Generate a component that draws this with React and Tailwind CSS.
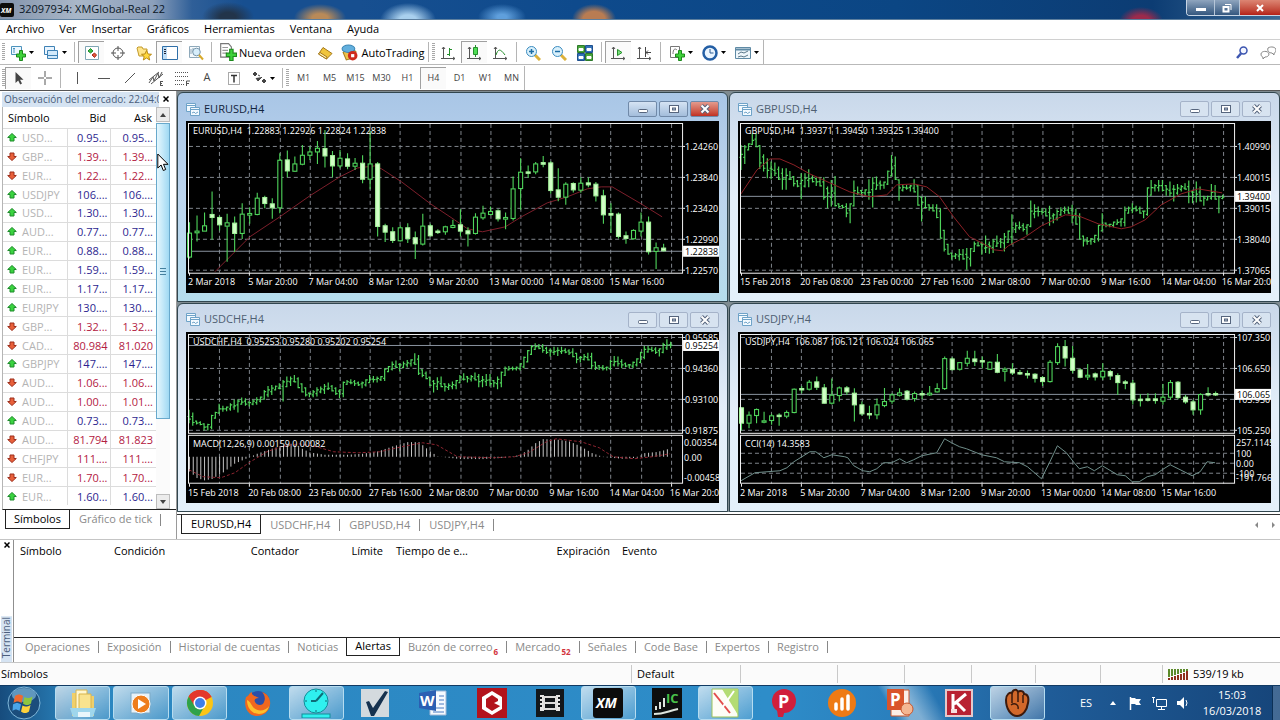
import React from 'react'
import clsx from 'clsx'

const MENUS = ['Archivo', 'Ver', 'Insertar', 'Gráficos', 'Herramientas', 'Ventana', 'Ayuda'];

const QUOTES = [
    ['USD...', '0.95...', '0.95...', 1],
    ['GBP...', '1.39...', '1.39...', 0],
    ['EUR...', '1.22...', '1.22...', 0],
    ['USDJPY', '106....', '106....', 1],
    ['USD...', '1.30...', '1.30...', 1],
    ['AUD...', '0.77...', '0.77...', 1],
    ['EUR...', '0.88...', '0.88...', 1],
    ['EUR...', '1.59...', '1.59...', 1],
    ['EUR...', '1.17...', '1.17...', 1],
    ['EURJPY', '130....', '130....', 1],
    ['GBP...', '1.32...', '1.32...', 0],
    ['CAD...', '80.984', '81.020', 0],
    ['GBPJPY', '147....', '147....', 1],
    ['AUD...', '1.06...', '1.06...', 0],
    ['AUD...', '1.00...', '1.01...', 0],
    ['AUD...', '0.73...', '0.73...', 1],
    ['AUD...', '81.794', '81.823', 0],
    ['CHFJPY', '111....', '111....', 0],
    ['EUR...', '1.70...', '1.70...', 0],
    ['EUR...', '1.60...', '1.60...', 1],
];

// Candles: high, body top, body bottom, low, filled
const EURUSD = [
    [397,430,502,506,0],[377,424,429,455,0],[368,408,424,424,0],[305,374,383,450,1],[378,383,405,422,1],[372,399,409,516,0],
    [380,400,431,487,1],[340,373,431,448,0],[352,371,376,402,0],[309,325,374,376,0],[318,323,341,355,1],[325,342,354,387,1],
    [190,211,354,370,0],[182,210,243,262,1],[200,222,244,246,0],[165,196,223,226,0],[170,186,196,210,0],[153,175,186,222,0],
    [120,176,198,233,1],[183,197,228,262,1],[180,205,228,235,0],[190,207,229,238,1],[204,220,229,240,0],[196,220,268,280,1],
    [122,222,268,298,0],[216,222,410,440,1],[402,408,427,457,1],[412,426,452,460,1],[407,414,453,455,0],[400,414,446,460,1],
    [425,444,462,508,1],[372,409,463,467,0],[402,408,438,440,1],[418,424,428,433,1],[408,411,426,435,0],[390,407,413,415,0],
    [358,405,424,440,1],[412,423,432,470,1],[370,382,431,434,0],[348,370,384,390,0],[350,365,374,376,0],[358,363,387,395,1],
    [368,383,388,418,0],[260,297,386,392,0],[205,247,296,360,0],[227,246,249,264,1],[216,222,246,253,0],[198,218,223,232,1],
    [214,219,302,312,1],[235,300,322,334,1],[277,283,322,345,0],[277,281,300,308,1],[262,280,301,309,0],[263,279,285,292,1],
    [276,283,318,335,1],[300,318,375,402,1],[340,371,376,430,1],[368,373,440,446,1],[425,438,446,462,1],[418,422,447,449,0],
    [368,397,424,440,0],[380,397,486,494,1],[458,474,485,538,0],[462,475,483,485,1],
];

const USDJPY = [
    [322,324,370,392,1],[335,346,370,385,0],[326,329,347,370,0],[336,363,367,370,0],[342,348,362,375,0],[340,346,349,378,1],
    [332,338,349,355,0],[266,268,338,340,0],[258,266,270,280,1],[240,247,268,272,0],[230,246,262,270,1],[252,264,310,312,1],
    [236,286,310,314,0],[260,264,287,305,0],[258,264,276,285,1],[265,280,315,365,1],[305,315,342,348,1],[318,341,345,358,1],
    [296,315,345,358,0],[264,305,317,322,0],[280,285,304,312,0],[265,279,286,290,0],[270,274,298,302,1],[275,281,296,305,0],
    [272,281,284,298,1],[258,280,285,288,0],[250,266,276,278,0],[170,176,266,270,0],[172,177,209,212,1],[186,188,208,212,0],
    [152,175,190,200,0],[152,177,185,198,1],[170,182,185,205,1],[185,187,208,210,0],[162,187,217,220,1],[202,208,214,245,0],
    [190,208,219,225,1],[210,218,221,225,1],[212,221,224,236,1],[220,223,235,248,1],[228,233,245,258,1],[180,187,245,248,0],
    [130,140,188,195,0],[120,140,174,200,1],[138,175,211,220,1],[205,210,232,235,1],[192,226,231,240,0],[218,222,231,242,1],
    [190,214,231,240,0],[210,215,228,240,1],[220,227,248,285,1],[240,246,250,268,1],[240,250,300,314,1],[282,298,301,320,1],
    [280,297,301,305,1],[280,297,302,312,1],[252,292,304,315,0],[240,248,292,300,0],[243,247,293,298,1],[285,292,306,312,1],
    [300,306,330,345,1],[280,284,330,345,0],[262,281,285,290,1],[275,281,285,288,1],
];

// Bars: high, low
const GBPUSD = [
    [165,240],[165,222],[160,182],[130,165],[130,172],[165,237],[193,245],[205,265],[215,268],[218,258],[230,270],[235,300],
    [235,300],[243,270],[258,290],[270,292],[250,328],[250,293],[238,292],[255,278],[262,288],[262,290],[262,330],[290,355],
    [270,350],[258,350],[340,355],[345,355],[340,382],[340,400],[272,350],[290,315],[300,318],[298,318],[268,330],[262,353],
    [260,300],[272,300],[275,297],[242,285],[195,260],[200,270],[268,333],[283,305],[285,300],[285,305],[268,308],[285,348],
    [320,395],[320,355],[343,363],[343,365],[343,385],[355,447],[420,485],[462,495],[488,510],[490,508],[478,512],[478,510],
    [475,540],[475,530],[455,487],[455,470],[455,495],[437,490],[455,492],[448,490],[437,472],[445,475],[430,485],[422,460],
    [373,465],[398,430],[395,420],[400,425],[403,435],[332,412],[343,385],[350,380],[355,375],[355,380],[348,408],[370,400],
    [358,392],[352,378],[350,372],[350,372],[345,400],[357,405],[370,450],[437,470],[442,465],[445,465],[435,460],[405,455],
    [370,425],[398,412],[402,412],[395,412],[388,405],[385,410],[350,410],[350,372],[340,370],[348,365],[350,372],[362,385],
    [292,378],[270,318],[282,305],[270,305],[270,305],[285,318],[275,320],[285,335],[282,315],[285,305],[280,300],[272,340],
    [300,340],[275,338],[290,335],[318,348],[318,332],[282,330],[285,330],[318,370],[315,328],
];

const USDCHF = [
    [330,370],[338,378],[362,374],[364,376],[370,392],[372,392],[345,388],[336,357],[312,342],[318,336],[320,334],[310,333],
    [300,330],[298,338],[293,315],[295,318],[305,320],[300,316],[292,315],[290,308],[270,300],[258,292],[255,285],[257,272],
    [250,268],[240,305],[230,262],[230,258],[225,248],[232,265],[250,278],[262,290],[278,292],[270,292],[262,290],[260,280],
    [252,282],[248,270],[255,275],[262,285],[268,295],[245,292],[240,255],[238,253],[240,258],[245,258],[245,265],[238,260],
    [225,250],[228,248],[230,248],[228,243],[205,243],[198,217],[185,212],[182,205],[190,215],[185,205],[180,203],[178,200],
    [160,195],[165,225],[208,232],[215,238],[230,258],[240,278],[232,270],[230,262],[250,275],[250,270],[245,268],[240,268],
    [225,250],[220,242],[228,248],[225,245],[218,242],[222,262],[228,262],[222,258],[222,260],[240,262],[230,268],[215,262],
    [200,228],[198,212],[200,212],[200,212],[190,212],[170,205],[150,188],[135,165],[130,150],[132,148],[132,158],[140,162],
    [145,170],[140,165],[142,168],[140,162],[145,160],[148,165],[145,172],[158,190],[168,188],[162,182],[158,182],[158,208],
    [185,210],[195,210],[195,212],[200,212],[180,210],[168,200],[170,200],[178,205],[188,202],[192,205],[185,205],[175,200],
    [155,190],[138,178],[138,158],[140,155],[142,162],[145,170],[128,160],[118,150],[125,145],
];

const MACD = [
    [0,515],[2,535],[4,542],[6,538],[9,518],[12,492],[16,472],[18,462],[21,450],[24,440],[27,432],[30,447],[32,458],[36,465],
    [42,465],[46,462],[50,455],[54,440],[58,427],[61,427],[64,455],[66,470],[72,478],[78,478],[84,474],[88,465],[90,450],
    [92,430],[94,418],[98,420],[101,425],[104,440],[107,460],[110,472],[115,477],[119,474],[121,460],[124,457],[126,452],[128,445],
];

const MACD_SIGNAL = '3,138 17,145 35,146 49,141 63,131 81,120 95,115 113,112 131,115 148,120 173,121 194,120 216,115 237,111 251,113 272,125 308,126 329,125 343,121 361,110 371,107 396,110 414,116 428,125 449,127 467,125 485,122';
const EUR_MA = '29,151 64,116 94,96 124,75 154,56 172,47 189,45 196,48 216,61 245,83 269,99 282,108 297,111 320,106 336,96 362,82 382,76 402,68 416,66 427,66 456,83 477,96';
const GBP_MA = '3,73 19,49 32,38 42,38 56,44 72,53 92,62 112,71 132,76 149,74 159,64 176,63 189,66 202,76 216,96 232,116 246,123 256,129 265,130 271,125 288,116 304,105 328,94 341,95 361,103 384,108 394,106 408,99 424,84 444,73 461,68 485,72';
const CCI = '3,149 17,141 42,139 49,136 56,130 72,120 78,120 86,126 94,123 107,125 110,126 116,134 125,139 132,140 139,137 146,131 154,131 162,127 169,131 176,128 184,124 199,121 207,107 214,111 222,115 229,117 244,123 259,126 267,130 282,131 290,135 304,147 312,131 320,114 329,121 336,130 342,137 350,135 357,139 365,134 380,143 388,144 395,150 402,150 410,145 418,143 425,138 433,133 455,144 463,140 470,130 478,131';

const FEB_DATES = ['15 Feb 2018', '20 Feb 08:00', '23 Feb 00:00', '27 Feb 16:00', '2 Mar 08:00', '7 Mar 00:00', '9 Mar 16:00', '14 Mar 04:00', '16 Mar 20:00'];
const MAR_DATES = ['2 Mar 2018', '5 Mar 20:00', '7 Mar 04:00', '8 Mar 12:00', '9 Mar 20:00', '13 Mar 00:00', '14 Mar 08:00', '15 Mar 16:00'];

const GRID = 30.17;
const LIME = '#4fd45b';

function Candles({ data, top }) {
    return data.map(([h, a, b, l, filled], i) => {
        const x = 3.5 + i * 7.54;
        const y = (v) => v / 3 - top;
        const height = Math.max(y(b) - y(a), 1.4);
        return (
            <g key={i} stroke={LIME} strokeWidth="1.1">
                <path d={`M${x} ${y(h)}V${y(a)}M${x} ${y(b)}V${y(l)}`} />
                <rect x={x - 2} y={y(a)} width="4" height={height} fill={filled ? '#d2ffc8' : '#000'} stroke={filled ? '#a5f29c' : LIME} />
            </g>
        );
    });
}

function Bars({ data, top }) {
    const mid = (i) => (data[i][0] + data[i][1]) / 2;
    const clamp = (v, [h, l]) => Math.min(Math.max(v, h + 2), l - 2) / 3 - top;
    const d = data.map((bar, i) => {
        const x = 3 + i * 3.77;
        const open = clamp(mid(Math.max(i - 1, 0)), bar);
        const close = clamp(mid(Math.min(i + 1, data.length - 1)), bar);
        return `M${x} ${bar[0] / 3 - top}V${bar[1] / 3 - top}M${x - 1.5} ${open}H${x}M${x} ${close}H${x + 1.9}`;
    }).join('');
    return <path d={d} stroke={LIME} strokeWidth="1.2" fill="none" />;
}

function Macd() {
    const bars = [];
    for (let s = 0; s < MACD.length - 1; s++) {
        const [k0, v0] = MACD[s];
        const [k1, v1] = MACD[s + 1];
        for (let k = k0; k < k1; k++) {
            bars.push([k, v0 + ((v1 - v0) * (k - k0)) / (k1 - k0)]);
        }
    }
    return (
        <>
            <path d={bars.map(([k, v]) => `M${3.5 + k * 3.77} 125V${v / 3 - 32}`).join('')} stroke="#c4c4c4" strokeWidth="1" />
            <polyline points={MACD_SIGNAL} fill="none" stroke="#8e2430" strokeDasharray="3 2" />
        </>
    );
}

function Chart({ info, rows, levels, priceY, price, dates, bottom = 152, indicator, extra = [], children }) {
    const cols = Array.from({ length: 16 }, (_, i) => Math.round(3 + GRID * (i + 1)) + 0.5);
    return (
        <svg viewBox="0 0 534 172" className="block w-full bg-black" fontFamily="'Open Sans', 'Noto Sans', sans-serif" fontSize="9" fill="#fff" role="img" aria-label={info}>
            <g stroke="#80858c" strokeWidth="1" strokeDasharray="4 3">
                {cols.map((x) => <path key={x} d={`M${x} 3V152`} />)}
                {rows.map((y) => <path key={y} d={`M3 ${y}.5H497`} />)}
            </g>
            {indicator && <path d="M3 102.5H497" stroke="#000" strokeWidth="2" />}
            <path d={`M3 ${priceY}.5H497`} stroke="#8a94a0" />
            {children}
            <g fill="none" stroke="#f2f2f2">
                <rect x="2.5" y="2.5" width="495" height={bottom - 2} />
                {indicator && <rect x="2.5" y="103.5" width="495" height="48" />}
                {dates.map((d, i) => <path key={d} d={`M${Math.round(3 + i * GRID * 2)}.5 152V155`} />)}
                {levels.map(([y]) => <path key={y} d={`M498 ${y}.5H500`} />)}
            </g>
            <text x="7" y="13" xmlSpace="preserve">{info}</text>
            {indicator && <text x="7" y="115">{indicator}</text>}
            {levels.map(([y, label]) => <text key={label} x="500" y={y + 4}>{label}</text>)}
            {extra.map(([y, label]) => <text key={label} x="499" y={y + 4}>{label}</text>)}
            <rect x="498" y={priceY - 5} width="36" height="11" />
            <text x="500" y={priceY + 4} fill="#000">{price}</text>
            {dates.map((d, i) => <text key={d} x={2 + i * GRID * 2} y="164">{d}</text>)}
        </svg>
    );
}

function WindowIcon() {
    return (
        <svg viewBox="0 0 14 13" className="h-[13px] w-[14px]" fill="#f3faff" stroke="#6fa3c8">
            <path d="M.5 .5h9v8h-9zM.5 2.5h9" />
            <path d="M4.500 4.500h9v8h-9zM4.500 6.500h9" />
            <path d="M6 10l2-1 1.500 1.500L12 9" fill="none" />
        </svg>
    );
}

function ChartWindow({ title, active, children }) {
    const button = clsx(
        'flex h-4 w-[29px] items-center justify-center rounded-[2px] border',
        active ? 'border-[#7089a8] bg-linear-to-b' : 'border-[#a5b3c9] bg-[#d7e3f0]'
    );
    const blue = active && 'from-[#d5e3f3] to-[#a3bddb]';
    return (
        <section className={clsx(
            'rounded-t-md border border-[#31464f] px-2 pb-2',
            active ? 'bg-linear-to-b from-[#a9c6e6] via-[#bdd5ee] to-[#b5dcec]' : 'bg-linear-to-b from-[#c9d8ea] via-[#e3eef9] to-[#e4f0fa]'
        )}>
            <header className="flex h-7 items-center gap-1 pt-1">
                <WindowIcon />
                <h2 className={clsx('flex-1 text-[11px]', active ? 'text-[#12233c]' : 'text-[#4f5f72]')}>{title}</h2>
                <div className="flex gap-[2px]">
                    <button type="button" aria-label="Minimizar" className={clsx(button, blue)}>
                        <svg viewBox="0 0 12 10" className="h-[10px] w-3"><rect x="1.500" y="5.500" width="9" height="3" rx="1" fill="#fff" stroke="#56657d" /></svg>
                    </button>
                    <button type="button" aria-label="Maximizar" className={clsx(button, blue)}>
                        <svg viewBox="0 0 12 10" className="h-[10px] w-3"><rect x="1.500" y="1.500" width="9" height="7" fill="#fff" stroke="#56657d" /><rect x="4.500" y="4" width="3" height="2" fill="#aebdd0" stroke="#56657d" /></svg>
                    </button>
                    <button type="button" aria-label="Cerrar" className={clsx(button, active && 'from-[#e39a8d] to-[#c02f22]')}>
                        <svg viewBox="0 0 12 10" className="h-[10px] w-3">
                            <path d="M2.500 1.500l7 7M9.500 1.500l-7 7" stroke="#56657d" strokeWidth="4" />
                            <path d="M2.500 1.500l7 7M9.500 1.500l-7 7" stroke="#fff" strokeWidth="2" />
                        </svg>
                    </button>
                </div>
            </header>
            {children}
        </section>
    );
}

function Grip() {
    return <span className="h-[18px] w-[3px] shrink-0 bg-[repeating-linear-gradient(#a8a8a8_0_1px,#fff_1px_2px)]" />;
}

function Sep() {
    return <span className="mx-[3px] h-5 w-px shrink-0 bg-[#b5b5b5]" />;
}

function Tool({ label, pressed, drop, children }) {
    return (
        <button
            type="button"
            aria-label={label}
            className={clsx('flex h-[22px] shrink-0 items-center justify-center border-t border-l', drop ? 'w-[33px] gap-[3px]' : 'w-[26px]', pressed ? 'border-[#a0a0a0] bg-[#fafafa]' : 'border-transparent')}
        >
            <svg viewBox="0 0 16 16" className="size-4 shrink-0" fill="none" stroke="#555">{children}</svg>
            {drop && <svg viewBox="0 0 5 3" className="h-[3px] w-[5px]"><path d="M0 0h5L2.500 3z" /></svg>}
        </button>
    );
}

function Plus() {
    return <path d="M9.500 5.500h3v3.500h3v3h-3v3.500h-3v-3.500h-3v-3h3z" fill="#3fd23a" stroke="#1c8a1c" />;
}

function Axes() {
    return <path d="M3.500 2v11.500M1 13.500h14M2 4l1.500-2L5 4M13 12l2 1.500-2 1.500" />;
}

function StandardToolbar() {
    return (
        <div className="flex h-[25px] items-center border-b border-[#b9b9b9] pl-[2px]">
            <Grip />
            <Tool label="Nuevo gráfico" drop>
                <path d="M1.500 1.500h10v8h-10z" fill="#eef8ff" stroke="#4c93bd" /><path d="M4 3v5M3 4l1-1 1 1" stroke="#4c93bd" /><Plus />
            </Tool>
            <Tool label="Perfiles" drop>
                <path d="M1.500 1.500h10v8h-10z" fill="#eaf5ff" stroke="#3f82b5" /><path d="M4.500 5.500h10v8h-10zM4.500 10.500h10" fill="#d2e9fa" stroke="#3f82b5" />
            </Tool>
            <Sep />
            <Tool label="Observación del mercado" pressed>
                <path d="M1.500 1.500h13v13h-13z" fill="#fff" stroke="#7fa6b4" />
                <path d="M4 6l2.500-2.500L9 6 6.500 8z" fill="#3fc045" stroke="#1c8a2a" /><path d="M8 10l2.500-2 2 2-2 2.500z" fill="#e2553a" stroke="#a82a18" />
            </Tool>
            <Tool label="Ventana de datos">
                <circle cx="8" cy="8" r="5" /><path d="M8 1v5M8 10v5M1 8h5M10 8h5" />
            </Tool>
            <Tool label="Navegador">
                <path d="M1 3l1-1h4l1 2h4v7H3z" fill="#ffe58a" stroke="#c29a2b" />
                <path d="M10.500 5.500l1.500 3.500 3.500.3-2.700 2.200.9 3.500-3.200-2-3.200 2 .9-3.500L5.500 9.300 9 9z" fill="#ffd83b" stroke="#b98a14" />
            </Tool>
            <Tool label="Terminal" pressed>
                <path d="M.5 1.500h15v13H.5z" fill="#fff" stroke="#2f6fa8" /><path d="M1 2h4v12H1z" fill="#bcdcf5" stroke="none" /><path d="M2 4.500h2M2 6.500h2M2 8.500h2" stroke="#223" />
            </Tool>
            <Tool label="Probador de estrategias">
                <path d="M1.500 1.500h10v11h-10z" stroke="#8fa9ba" fill="#f5fafd" /><path d="M3 4v5M5 3v4" stroke="#8fa9ba" />
                <circle cx="8.500" cy="7" r="3.800" fill="#d7eefb" stroke="#7795aa" /><path d="M11 10l4 4.500" stroke="#d7a92b" strokeWidth="2" />
            </Tool>
            <Sep />
            <button type="button" className="flex shrink-0 items-center gap-[2px] pl-1 text-[11px] leading-none">
                <svg viewBox="0 0 16 16" className="size-[18px]" fill="none" stroke="#555">
                    <path d="M1.500.5h7l2.500 3v9H1.500z" fill="#fff" stroke="#777" /><path d="M3 4h5M3 6.500h5M3 9h4" stroke="#999" /><Plus />
                </svg>
                Nueva orden
            </button>
            <span className="w-1.5 shrink-0" />
            <Tool label="MetaEditor">
                <path d="M1.500 9L6 2.500l9 6L9.500 14z" fill="#f0c53d" stroke="#a6791a" /><path d="M1.500 9l8 5 .5-2L3 7.500z" fill="#fff2b8" stroke="#a6791a" />
            </Tool>
            <button type="button" className="flex shrink-0 items-center gap-[3px] pl-1 text-[11px] leading-none">
                <svg viewBox="0 0 16 16" className="size-[17px]">
                    <path d="M2 8l6-5 6 4-2 6-7 2z" fill="#eec14a" stroke="#a97f20" /><ellipse cx="7" cy="4.500" rx="6" ry="3.500" fill="#63b0de" stroke="#3a86b5" />
                    <circle cx="11" cy="11" r="4.500" fill="#cf2a1d" /><path d="M9.500 9.500h3v3h-3z" fill="#fff" />
                </svg>
                AutoTrading
            </button>
            <Sep />
            <Grip />
            <Tool label="Barras"><Axes /><path d="M9.500 3v8M7 9.500h2.500M9.500 4.500H12" stroke="#258f2c" /></Tool>
            <Tool label="Velas" pressed><Axes /><path d="M9.500 0v12" stroke="#258f2c" /><path d="M7.500 2.500h4v7h-4z" fill="#4fdd55" stroke="#258f2c" /></Tool>
            <Tool label="Línea"><Axes /><path d="M4 10c2-6 4-7 9 0" stroke="#258f2c" /></Tool>
            <Sep />
            <Tool label="Acercar">
                <path d="M10 10l5 5" stroke="#dcb13a" strokeWidth="3" /><circle cx="6.500" cy="6.500" r="5" fill="#d9f0fb" stroke="#3c8cc0" /><path d="M6.500 4v5M4 6.500h5" stroke="#1c6ca5" strokeWidth="1.500" />
            </Tool>
            <Tool label="Alejar">
                <path d="M10 10l5 5" stroke="#dcb13a" strokeWidth="3" /><circle cx="6.500" cy="6.500" r="5" fill="#d9f0fb" stroke="#3c8cc0" /><path d="M4 6.500h5" stroke="#1c6ca5" strokeWidth="1.500" />
            </Tool>
            <Tool label="Mosaico">
                <path d="M.5.5h7v7h-7zM8.500 8.500h7v7h-7z" fill="#49a53b" stroke="#2c7a2a" /><path d="M8.500.5h7v7h-7zM.5 8.500h7v7h-7z" fill="#3271b8" stroke="#1e4f8d" />
                <path d="M2 3.500h4v2H2zM10 3.500h4v2h-4zM2 11.500h4v2H2zM10 11.500h4v2h-4z" fill="#fff" stroke="#fff" />
            </Tool>
            <Sep />
            <Tool label="Desplazamiento automático" pressed><Axes /><path d="M7.500 4.500l4.500 3-4.500 3z" fill="#7be07a" stroke="#258f2c" /></Tool>
            <Tool label="Desplazar gráfico"><Axes /><path d="M9.500 2v10M15 7.500h-5M12 5.500l-2 2 2 2" stroke="#444" /></Tool>
            <Sep />
            <Tool label="Indicadores" drop>
                <path d="M1.500 1.500h9v11h-9z" fill="#fff" stroke="#777" /><path d="M4 9c0-5 2-6 4-4" stroke="#777" /><Plus />
            </Tool>
            <Tool label="Periodos" drop>
                <circle cx="8" cy="8" r="6.500" fill="#eaf5ff" stroke="#245fa5" strokeWidth="2.500" /><path d="M8 4v4h3.500" stroke="#2c5d94" />
            </Tool>
            <Tool label="Plantillas" drop>
                <path d="M.5 2.500h15v11H.5z" fill="#eef6fb" stroke="#5f8aa5" /><path d="M1 4.500h14" stroke="#5f8aa5" strokeWidth="2" /><path d="M3 9l3-2 3 1 4-2M3 12l3-1 3 1 4-2" stroke="#5b7789" />
            </Tool>
            <span className="h-6 w-px bg-[#b5b5b5]" />
            <span className="flex-1" />
            <Tool label="Buscar"><circle cx="9.500" cy="5.500" r="3.500" fill="#f3f6ff" stroke="#3c55b0" strokeWidth="1.500" /><path d="M7 8.500L3 13" stroke="#3c55b0" strokeWidth="2.500" /></Tool>
            <Tool label="Chat">
                <path d="M8 3c3-2 8-1 8 2 0 2-1 3-2 3v2l-2-2c-3 0-5-2-4-5z" fill="#fff" stroke="#888" /><path d="M1 9c0-3 7-4 8 0 0 2-2 3-4 3l-2 2v-2c-1 0-2-1-2-3z" fill="#fff" stroke="#888" />
            </Tool>
        </div>
    );
}

function DrawToolbar() {
    const periods = ['M1', 'M5', 'M15', 'M30', 'H1', 'H4', 'D1', 'W1', 'MN'];
    return (
        <div className="flex h-[26px] items-center border-b border-[#555] pl-[2px]">
            <Grip />
            <Tool label="Cursor" pressed><path d="M4.500 2v11l2.700-2.500 2 4 1.800-1-2-3.800h3.500z" fill="#444" stroke="none" /></Tool>
            <Tool label="Cruz"><path d="M8 1v6M8 9v6M1 8h6M9 8h6" /></Tool>
            <Sep />
            <Tool label="Línea vertical"><path d="M7.500 2v12" /></Tool>
            <Tool label="Línea horizontal"><path d="M2 8.500h12" /></Tool>
            <Tool label="Línea de tendencia"><path d="M3 13L13 3" /></Tool>
            <Tool label="Canal equidistante">
                <path d="M1 10L11 2M3 14L15 4M1 13l4-6 1 4 4-8 1 5 3-6M12 11.500h3M12 13.500h2M12 15.500h3M12.500 11v5" />
            </Tool>
            <Tool label="Retroceso de Fibonacci">
                <path d="M1 2.500h13M1 6.500h13M1 10.500h9M1 14.500h9" strokeDasharray="1 1" /><path d="M12.500 16v-5H16M12 13.500h3" />
            </Tool>
            <button type="button" className="w-[26px] text-[11px] text-[#444]">A</button>
            <Tool label="Etiqueta de texto"><path d="M2.500 2.500h11v12h-11z" strokeDasharray="1 1" /><path d="M5 5.500h6M8 5.500v7" stroke="#333" strokeWidth="1.500" /></Tool>
            <Tool label="Flechas" drop>
                <path d="M2 4l2-2 2 2-2 2zM11 11l2-2 2 2-2 2zM7 5l2 1M5 8l2 3 4-4" fill="#444" stroke="#444" />
            </Tool>
            <Sep />
            <Grip />
            <div className="flex pl-px">
                {periods.map((p) => (
                    <button key={p} type="button" className={clsx('h-[22px] w-[26px] border-t border-l text-[9px] text-[#444]', p === 'H4' ? 'border-[#a0a0a0] bg-[#fafafa]' : 'border-transparent')}>{p}</button>
                ))}
            </div>
            <span className="h-6 w-px bg-[#b5b5b5]" />
        </div>
    );
}

function MarketWatch() {
    return (
        <aside className="flex w-[177px] shrink-0 flex-col border-r border-[#9a9a9a] bg-white pl-[2px]">
            <div className="flex h-4 items-center pr-[7px]">
                <h2 className="w-[157px] overflow-hidden bg-[#d5e3f2] pl-[2px] text-[10px] leading-[15px] whitespace-nowrap text-[#4a5e7c]">Observación del mercado: 22:04:0</h2>
                <button type="button" aria-label="Cerrar panel" className="ml-1 flex flex-1 justify-center">
                    <svg viewBox="0 0 6 6" className="size-[6px]"><path d="M.5.5l5 5M5.500.5l-5 5" stroke="#000" strokeWidth="1.500" /></svg>
                </button>
            </div>
            <div className="flex h-[403px] border-b border-l border-b-[#222] border-l-[#b5b5b5]">
                <div className="w-[153px] overflow-hidden">
                    <table className="h-[398px] w-full table-fixed border-collapse text-[11px] leading-none">
                        <thead>
                            <tr className="h-[21px]">
                                <th className="w-16 pl-[5px] text-left font-normal">Símbolo</th>
                                <th className="w-[43px] pr-1 text-right font-normal">Bid</th>
                                <th className="pr-1 text-right font-normal">Ask</th>
                            </tr>
                        </thead>
                        <tbody>
                            {QUOTES.map(([symbol, bid, ask, up], i) => (
                                <tr key={i} className={clsx('border-t border-[#dcdcdc]', up ? 'text-[#2d1f8f]' : 'text-[#b3203f]')}>
                                    <td className="border-r border-[#dcdcdc] pl-[4px] text-[#b4b4b4]">
                                        <span className="flex items-center gap-[5px]">
                                            <svg viewBox="0 0 10 9" className="h-[9px] w-[10px]">
                                                {up
                                                    ? <path d="M5 .5l4.300 4H7v3.500H3V4.500H.7z" fill="#3ad33f" stroke="#1e8a2c" />
                                                    : <path d="M5 8.500l4.300-4H7V1H3v3.500H.7z" fill="#e8603a" stroke="#9c2f1c" />}
                                            </svg>
                                            {symbol}
                                        </span>
                                    </td>
                                    <td className="border-r border-[#dcdcdc] pr-[2px] text-right">{bid}</td>
                                    <td className="pr-[3px] text-right">{ask}</td>
                                </tr>
                            ))}
                        </tbody>
                    </table>
                </div>
                <div className="flex w-[14px] flex-col bg-[#fbfbfb]">
                    <button type="button" aria-label="Subir" className="flex h-[15px] items-center justify-center border border-[#bdbdbd] bg-[#ececec]">
                        <svg viewBox="0 0 6 4" className="h-1 w-[6px]"><path d="M0 4h6L3 0z" fill="#444" /></svg>
                    </button>
                    <div className="mt-px flex h-[296px] flex-col items-center justify-center gap-[2px] border border-[#68a9cc] bg-linear-to-r from-[#e5f7fe] to-[#9fd9f3]">
                        <span className="h-px w-[6px] bg-[#44809f]" />
                        <span className="h-px w-[6px] bg-[#44809f]" />
                        <span className="h-px w-[6px] bg-[#44809f]" />
                    </div>
                    <span className="flex-1" />
                    <button type="button" aria-label="Bajar" className="flex h-[15px] items-center justify-center border border-[#bdbdbd] bg-[#ececec]">
                        <svg viewBox="0 0 6 4" className="h-1 w-[6px]"><path d="M0 0h6L3 4z" fill="#444" /></svg>
                    </button>
                </div>
            </div>
            <div className="flex h-[19px] items-center pl-[3px] text-[11px]">
                <button type="button" className="h-full border-x border-b border-[#222] bg-white px-2">Símbolos</button>
                <button type="button" className="pl-[9px] text-[#8a8a8a]">Gráfico de tick</button>
                <span className="ml-[8px] h-3 w-px bg-[#888]" />
            </div>
        </aside>
    );
}

function Workspace() {
    const eurLevels = [[25, '1.24260'], [56, '1.23840'], [87, '1.23420'], [118, '1.22990'], [149, '1.22570']];
    const gbpLevels = [[25, '1.40990'], [56, '1.40015'], [87, '1.39015'], [118, '1.38040'], [149, '1.37065']];
    const chfLevels = [[5, '0.95585'], [36, '0.94360'], [67, '0.93100'], [98, '0.91875']];
    const jpyLevels = [[5, '107.350'], [36, '106.650'], [67, '105.950'], [98, '105.250']];
    return (
        <main className="flex min-w-0 flex-1 flex-col bg-white">
            <div className="grid grid-cols-2 gap-px bg-[#7f8b91] pt-px">
                <ChartWindow title="EURUSD,H4" active>
                    <Chart info="EURUSD,H4  1.22883 1.22926 1.22824 1.22838" rows={[25, 56, 87, 118, 149]} levels={eurLevels} priceY={130} price="1.22838" dates={MAR_DATES}>
                        <polyline points={EUR_MA} fill="none" stroke="#7d1f2b" />
                        <Candles data={EURUSD} top={31} />
                    </Chart>
                </ChartWindow>
                <ChartWindow title="GBPUSD,H4">
                    <Chart info="GBPUSD,H4  1.39371 1.39450 1.39325 1.39400" rows={[25, 56, 87, 118, 149]} levels={gbpLevels} priceY={75} price="1.39400" dates={FEB_DATES}>
                        <Bars data={GBPUSD} top={31} />
                        <polyline points={GBP_MA} fill="none" stroke="#8e2026" />
                    </Chart>
                </ChartWindow>
                <ChartWindow title="USDCHF,H4">
                    <Chart info="USDCHF,H4  0.95253 0.95280 0.95202 0.95254" rows={[5, 36, 67, 98]} levels={chfLevels} priceY={13} price="0.95254" dates={FEB_DATES} bottom={101}
                        indicator="MACD(12,26,9) 0.00159 0.00082" extra={[[110, '0.00354'], [125, '0.00'], [145, '-0.00458']]}>
                        <Bars data={USDCHF} top={32} />
                        <Macd />
                    </Chart>
                </ChartWindow>
                <ChartWindow title="USDJPY,H4">
                    <Chart info="USDJPY,H4  106.087 106.121 106.024 106.065" rows={[5, 36, 67, 98, 121, 131, 141]} levels={jpyLevels} priceY={62} price="106.065" dates={MAR_DATES} bottom={101}
                        indicator="CCI(14) 14.3583" extra={[[110, '257.1145'], [121, '100'], [131, '0.00'], [141, '-100'], [145, '-191.766']]}>
                        <Candles data={USDJPY} top={32} />
                        <polyline points={CCI} fill="none" stroke="#6f8f8b" />
                    </Chart>
                </ChartWindow>
            </div>
            <div className="mt-[2px] flex h-[21px] items-start border-t border-[#333] pl-1 text-[11px] text-[#8a8a8a]">
                <button type="button" className="h-[19px] border-x border-b border-[#222] px-[9px] text-black">EURUSD,H4</button>
                {['USDCHF,H4', 'GBPUSD,H4', 'USDJPY,H4'].map((t) => (
                    <button key={t} type="button" className="flex h-[19px] items-center pl-[9px]">
                        {t}<span className="ml-[9px] h-3 w-px bg-[#888]" />
                    </button>
                ))}
                <span className="flex-1" />
                <svg viewBox="0 0 22 8" className="mt-1.5 mr-1 h-2 w-[22px]" fill="#888"><path d="M4 1v6L1 4zM18 1v6l3-3z" /></svg>
            </div>
        </main>
    );
}

function Terminal() {
    const tabs = [['Operaciones'], ['Exposición'], ['Historial de cuentas'], ['Noticias'], ['Alertas'], ['Buzón de correo', '6'], ['Mercado', '52'], ['Señales'], ['Code Base'], ['Expertos'], ['Registro']];
    return (
        <section className="flex h-[123px] border-t border-[#c5c5c5] bg-white">
            <div className="flex w-[14px] shrink-0 flex-col items-center justify-between border-r border-[#8f8f8f]">
                <button type="button" aria-label="Cerrar terminal" className="pt-[2px]">
                    <svg viewBox="0 0 6 6" className="size-[6px]"><path d="M.5.5l5 5M5.500.5l-5 5" stroke="#000" strokeWidth="1.500" /></svg>
                </button>
                <h2 className="rotate-180 bg-[#d5e3f2] px-px pt-1 text-[10px] leading-[11px] text-[#4a5e7c] [writing-mode:vertical-rl]">Terminal</h2>
            </div>
            <div className="flex min-w-0 flex-1 flex-col">
                <div className="flex-1 border-b border-[#222]">
                    <table className="w-full table-fixed text-[11px]">
                        <thead>
                            <tr className="h-[22px] *:font-normal">
                                <th className="w-[94px] pl-[6px] text-left">Símbolo</th>
                                <th className="w-[112px] pl-[6px] text-left">Condición</th>
                                <th className="w-[85px] pr-[6px] text-right">Contador</th>
                                <th className="w-[84px] pr-[6px] text-right">Límite</th>
                                <th className="w-[140px] pl-[7px] text-left">Tiempo de e...</th>
                                <th className="w-[87px] pr-[6px] text-right">Expiración</th>
                                <th className="pl-[6px] text-left">Evento</th>
                            </tr>
                        </thead>
                    </table>
                </div>
                <div className="flex h-6 items-start pl-[3px] text-[11px] text-[#8a8a8a]">
                    {tabs.map(([name, count]) => (
                        <button key={name} type="button" className={clsx('relative flex h-[18px] items-center', name === 'Alertas' ? 'border-x border-b border-[#222] px-2 text-black' : 'pl-2')}>
                            {name}
                            {count && <sub className="bottom-[-5px] ml-px text-[8px] font-bold text-[#d2323c]">{count}</sub>}
                            {name !== 'Alertas' && name !== 'Noticias' && <span className="ml-2 h-3 w-px bg-[#888]" />}
                            {name === 'Noticias' && <span className="w-2" />}
                        </button>
                    ))}
                </div>
            </div>
        </section>
    );
}

function StatusBar() {
    const cell = 'h-[18px] shrink-0 border-l border-[#c9c9c9]';
    return (
        <footer className="flex h-[23px] items-center border-t border-[#c5c5c5] bg-[#fbfbfb] text-[11px]">
            <span className="flex-1 pl-px">Símbolos</span>
            <span className={clsx(cell, 'w-[109px] pl-[5px] leading-[18px]')}>Default</span>
            <span className={clsx(cell, 'w-[97px]')} />
            <span className={clsx(cell, 'w-[67px]')} />
            <span className={clsx(cell, 'w-[67px]')} />
            <span className={clsx(cell, 'w-[64px]')} />
            <span className={clsx(cell, 'w-[65px]')} />
            <span className={clsx(cell, 'w-[62px]')} />
            <span className={clsx(cell, 'flex w-[118px] items-center gap-[3px] pl-[5px]')}>
                <svg viewBox="0 0 22 12" className="h-3 w-[22px]" strokeWidth="2">
                    <path d="M1 1v8M4 1v7M7 1v6M10 1v5M13 1v4M16 1v3M19 1v2" stroke="#5c8a2a" />
                    <path d="M1 10v2M4 9v3M7 8v4M10 7v5M13 6v6M16 5v7M19 3v9" stroke="#8e2f1c" />
                </svg>
                539/19 kb
            </span>
        </footer>
    );
}

const APPS = [
    { name: 'Explorador', open: true, icon: <><path d="M4 5h9l2 3h11v20H4z" fill="#f0cf6a" /><path d="M8 2h11v22H8z" fill="#fff7d0" stroke="#d8b44c" /><path d="M11 6h12v20H11z" fill="#f9e38f" stroke="#d8b44c" /><path d="M2 20h26l-3 9H5z" fill="#9fd6ec" /><path d="M10 24h12v5H10z" fill="#e9f6fb" /></> },
    { name: 'Reproductor', open: true, icon: <><rect x="5" y="5" width="19" height="20" fill="#e6f1f8" stroke="#7eaac6" /><circle cx="15" cy="16" r="9" fill="#ee7d1c" stroke="#fff" /><path d="M12 11l8 5-8 5z" fill="#fff" /></> },
    { name: 'Chrome', open: true, icon: <><circle cx="15" cy="15" r="13" fill="#fbc516" /><path d="M15 15L3.700 8.500A13 13 0 0 1 26.500 9z" fill="#e3382c" /><path d="M15 15L3.700 8.500A13 13 0 0 0 14 28l5-9z" fill="#2ea24b" /><path d="M15 9h11.500A13 13 0 0 0 3.700 8.500L9 17z" fill="#e3382c" /><circle cx="15" cy="15" r="6.500" fill="#fff" /><circle cx="15" cy="15" r="5" fill="#3f7fe8" /></> },
    { name: 'Firefox', icon: <><circle cx="15" cy="15" r="12" fill="#2b4fa8" /><path d="M3 9c2 0 3-4 6-5-1 3 3 4 7 6-4 0-5 2-4 4 2 4 8 4 9 0 2-4 0-8-2-10 6 2 9 7 8 13-1 7-7 11-13 11C5 28 0 19 3 9z" fill="#f0671f" /><path d="M4 12c0 8 5 14 12 14 5 0 9-3 10-8-3 5-11 6-15 2-3-3-3-6-7-8z" fill="#fcc02c" /></> },
    { name: 'Reloj', open: true, icon: <><circle cx="15" cy="13" r="12" fill="#2ff0ef" stroke="#128d99" /><path d="M15 13l7-8M15 13h-5" stroke="#0e6d78" strokeWidth="2" /><path d="M15 2v2M15 22v2M4 13h2M24 13h2" stroke="#0e6d78" /><rect x="1" y="26" width="28" height="4" fill="#2ff0ef" stroke="#128d99" /></> },
    { name: 'Tareas', icon: <><rect x="1" y="1" width="28" height="28" fill="#d4dade" /><path d="M6 14l3-1 4 7L25 3l3 1-14 24h-3z" fill="#16324f" /></> },
    { name: 'Word', icon: <><path d="M12 3h16v24H12z" fill="#f5f9fe" stroke="#9eb7d7" /><path d="M21 8h5M21 12h5M21 16h5M15 20h11M15 24h11" stroke="#4b7bc0" /><path d="M1 5l17-3v21L1 20z" fill="#2b5fb3" /><text x="2" y="18" fontSize="15" fontWeight="bold" fill="#fff">W</text></> },
    { name: 'Camtasia', icon: <><rect x="0" y="0" width="30" height="30" fill="#b3131c" /><path d="M15 3l10 6v5l-4 2v-5l-6-4-6 4v8l6 4 10-6v4l-10 6-10-6V9z" fill="#fff" /><path d="M17 15l8-4v8z" fill="#fff" /></> },
    { name: 'Vídeo', icon: <><rect x="1" y="1" width="28" height="28" fill="#13171b" /><path d="M5 7h4v16H5zM21 7h4v16h-4z" fill="#e6e6e6" /><path d="M9 9h12v12H9z" fill="none" stroke="#dcdcdc" strokeWidth="2" /><path d="M9 15h12" stroke="#dcdcdc" strokeWidth="2" /><path d="M5 10h2M5 14h2M5 18h2M23 10h2M23 14h2M23 18h2" stroke="#13171b" strokeWidth="2" /></> },
    { name: 'XM', open: true, icon: <><rect x="0" y="0" width="30" height="30" rx="3" fill="#0c0c0c" /><text x="3" y="20" fontSize="14" fontWeight="bold" fontStyle="italic" fill="#fff">XM</text></> },
    { name: 'IC Markets', icon: <><rect x="0" y="0" width="30" height="30" fill="#0d0f0f" /><path d="M4 22v-4M8 21v-7M12 19v-9" stroke="#dfe6df" strokeWidth="2" /><path d="M2 26c10 0 14-3 24-5" stroke="#dfe6df" strokeWidth="2" fill="none" /><text x="14" y="15" fontSize="13" fontWeight="bold" fill="#49c04a">IC</text></> },
    { name: 'Notas', open: true, icon: <><path d="M2 1h26v28H2z" fill="#fdfdf6" stroke="#9cc35b" /><path d="M12 1l16 26V1z" fill="#b4dc74" /><path d="M4 5l16 20" stroke="#e24b4b" strokeWidth="2" /><path d="M24 3L12 20" stroke="#fff" strokeWidth="2" /></> },
    { name: 'Pinterest', icon: <><circle cx="15" cy="13" r="12" fill="#d11f3c" /><path d="M8 22h8l-2 7h-5z" fill="#d11f3c" /><text x="9" y="20" fontSize="18" fontWeight="bold" fill="#fff">P</text></> },
    { name: 'Analytics', icon: <><circle cx="15" cy="15" r="14" fill="#ee7a14" /><path d="M9 21v-5M15 21V11M21 21V8" stroke="#fff" strokeWidth="3.500" strokeLinecap="round" /></> },
    { name: 'PowerPoint', icon: <><path d="M6 2h18v26H6z" fill="#fbeee7" stroke="#c9562c" /><path d="M2 1h17v21H2z" fill="#d9542b" /><text x="5" y="18" fontSize="17" fontWeight="bold" fill="#fff">P</text><circle cx="22" cy="21" r="6" fill="#f4b692" stroke="#c9562c" /></> },
    { name: 'K', icon: <><rect x="2" y="2" width="26" height="26" fill="#b82232" stroke="#e6c8ca" strokeWidth="2" /><path d="M9 6v18M10 16L22 6M12 14l9 9" stroke="#fff" strokeWidth="3" /><path d="M7 21h6v4H7z" fill="#f6dede" /></> },
    { name: 'Puño', open: true, icon: <><path d="M4 12c0-6 4-8 6-7 1-4 5-4 6-1 2-2 6-1 6 2 4 0 5 4 4 9-1 7-5 13-11 13S4 21 4 12z" fill="#d2682a" stroke="#3d1a0c" strokeWidth="2" /><path d="M10 6v9M16 5v9M21 7v8M9 17c4-3 8 0 7 4" stroke="#3d1a0c" strokeWidth="1.500" fill="none" /></> },
];

function Taskbar() {
    return (
        <nav className="flex h-[35px] items-stretch border-t border-[#123a63] bg-[linear-gradient(60deg,transparent_69%,#ffffff66_70%,#ffffff66_71%,transparent_73%),linear-gradient(90deg,#174c7d_0,#2b86c0_6%,#2e8dc9_60%,#2a7fbd_70%,#1f5c98_82%,#16457a_100%)]" aria-label="Barra de tareas">
            <button type="button" aria-label="Inicio" className="flex w-[55px] shrink-0 items-center justify-center pr-2">
                <svg viewBox="0 0 34 34" className="size-[34px]">
                    <circle cx="17" cy="17" r="16" fill="#1b4d7c" stroke="#7fb6d9" />
                    <ellipse cx="17" cy="9" rx="12" ry="7" fill="#7db7da" opacity=".7" />
                    <path d="M8 10c3-2 5-2 8 0l-1.500 7c-3-2-5-2-8 0z" fill="#ee6a30" /><path d="M17.500 11c3 2 5 1 8-.5l-1.500 7c-3 2-5 2-8 0z" fill="#8dc63f" />
                    <path d="M6 18.500c3-2 5-2 8 0L12.500 25c-3-2-4.500-2-7 0z" fill="#4aa5e8" /><path d="M15.500 19.500c3 2 5 1 8-.5L22 25.500c-3 2-5 2-8 0z" fill="#fcd13c" />
                </svg>
            </button>
            <div className="grid min-w-0 flex-1 grid-cols-17 gap-x-[3px] pr-[3px]">
                {APPS.map(({ name, open, icon }) => (
                    <button key={name} type="button" aria-label={name} className={clsx('flex items-center justify-center rounded-[3px] border', open ? 'border-[#b5dcf0] bg-linear-to-br from-white/70 to-white/15' : 'border-transparent')}>
                        <svg viewBox="0 0 30 30" className="size-[30px]">{icon}</svg>
                    </button>
                ))}
            </div>
            <div className="flex w-[232px] shrink-0 items-center text-[11px] text-white">
                <span className="w-14 pl-8">ES</span>
                <svg viewBox="0 0 100 16" className="h-4 w-[100px]" fill="none" stroke="#fff">
                    <path d="M6 10h6L9 6z" fill="#fff" stroke="none" />
                    <path d="M26.500 2v13" strokeWidth="1.500" /><path d="M27 3h4l1 1h5l-2 3 2 3h-5l-1-1h-4z" fill="#fff" stroke="none" />
                    <path d="M52.500 4.500h10v7h-10zM57.500 12v2.500M54 14.500h7M49.500 2v6M48 2.500h3" />
                    <path d="M73 6h3l4-4v12l-4-4h-3z" fill="#fff" stroke="none" /><path d="M82 5q2 3 0 6" />
                </svg>
                <time className="-ml-2 flex-1 text-center leading-[16px]">15:03<br />16/03/2018</time>
                <span className="ml-1 h-full w-2 border-l border-[#0d3157] bg-white/20" />
            </div>
        </nav>
    );
}

function TitleBar() {
    return (
        <header className="flex h-5 items-start border-b border-[#5d7f9e] bg-[linear-gradient(90deg,#8292ab_0,#a9b7c8_6%,#8b9fbb_12%,#2f5f98_15%,#174f90_19%,#174f90_28%,#0e4a8c_45%,#0b4684_70%,#0c3c73_90%,#3c6a95_100%)]">
            <div className="flex h-[19px] w-full items-center bg-[radial-gradient(ellipse_26px_15px_at_228px_17px,#22344a_30%,transparent),radial-gradient(ellipse_26px_14px_at_320px_18px,#b98a58_30%,transparent),radial-gradient(ellipse_28px_17px_at_408px_20px,#a9d0ee_30%,transparent),radial-gradient(ellipse_24px_13px_at_502px_17px,#5f9fdc_20%,transparent),radial-gradient(ellipse_22px_15px_at_594px_19px,#b97c52_50%,transparent),radial-gradient(ellipse_22px_14px_at_1141px_21px,#9c2a4c_40%,transparent)]">
                <svg viewBox="0 0 14 14" className="size-[14px]" aria-hidden="true"><rect width="14" height="14" rx="2" fill="#0c0c0c" /><text x="1" y="10" fontSize="7" fontWeight="bold" fontStyle="italic" fill="#fff">XM</text></svg>
                <h1 className="ml-[5px] flex-1 text-[11px] text-[#0b1726]">32097934: XMGlobal-Real 22</h1>
                <div className="flex h-4 self-start overflow-hidden rounded-bl border-b border-l border-[#c7d5e4]">
                    <button type="button" aria-label="Minimizar" className="flex w-[27px] items-center justify-center bg-linear-to-b from-[#8fa5be] to-[#35587f]">
                        <span className="mt-1 h-[3px] w-[10px] bg-white" />
                    </button>
                    <button type="button" aria-label="Restaurar" className="flex w-[26px] items-center justify-center border-x border-[#b6c6d8] bg-linear-to-b from-[#8fa5be] to-[#35587f]">
                        <svg viewBox="0 0 10 10" className="size-[10px]" fill="none" stroke="#fff"><path d="M3 1.500h6V7" /><path d="M1.500 4h5v4.500h-5z" strokeWidth="2" /></svg>
                    </button>
                    <button type="button" aria-label="Cerrar" className="flex w-[40px] items-center justify-center bg-linear-to-b from-[#dc8573] to-[#b41f17]">
                        <svg viewBox="0 0 8 8" className="size-2"><path d="M1 1l6 6M7 1L1 7" stroke="#fff" strokeWidth="2" /></svg>
                    </button>
                </div>
            </div>
        </header>
    );
}

function App() {
    return (
        <div className="relative flex min-h-screen flex-col overflow-hidden bg-white font-['Open_Sans','Noto_Sans',sans-serif] text-black">
            <TitleBar />
            <nav className="flex h-5 items-center gap-[15px] border-b border-[#d0d0d0] pl-[6px] text-[11px]">
                {MENUS.map((m) => <button key={m} type="button">{m}</button>)}
            </nav>
            <StandardToolbar />
            <DrawToolbar />
            <div className="flex flex-1">
                <MarketWatch />
                <Workspace />
            </div>
            <Terminal />
            <StatusBar />
            <Taskbar />
            <svg viewBox="0 0 12 19" className="pointer-events-none absolute top-[153px] left-[157px] h-[19px] w-3" aria-hidden="true">
                <path d="M.8 1v14l3.300-3 2.200 5.500 2.400-1-2.200-5.200h4.500z" fill="#fff" stroke="#000" />
            </svg>
        </div>
    )
}

export default App
